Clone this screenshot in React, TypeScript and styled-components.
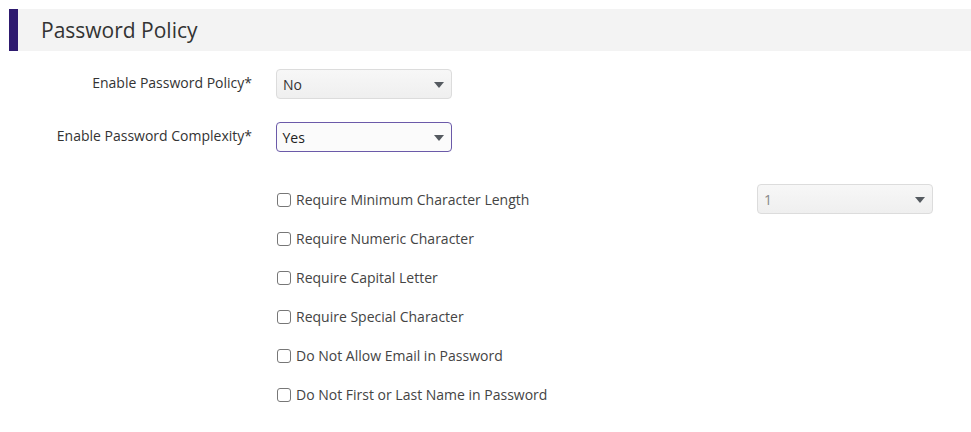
import React from "react";
import styled, { createGlobalStyle } from "styled-components";

const Global = createGlobalStyle`
  html, body { margin: 0; padding: 0; background: #ffffff; }
  body { font-family: "Open Sans", "Noto Sans", Arial, sans-serif; color: #333; }
  * { box-sizing: border-box; }
`;

const Page = styled.div`
  padding: 9px 0 0 9px;
  width: 971px;
  height: 432px;
  overflow: hidden;
`;

const Header = styled.div`
  height: 42px;
  background: #f3f3f3;
  border-left: 9px solid #2e1a6f;
  display: flex;
  align-items: center;
  padding-left: 23px;
`;

const Title = styled.h2`
  margin: 0;
  font-size: 21px;
  font-weight: 400;
  color: #333;
  line-height: 1;
  padding-top: 1px;
`;

const Form = styled.div`
  padding-top: 18px;
  display: flex;
  flex-direction: column;
`;

const FieldRow = styled.div`
  display: grid;
  grid-template-columns: 243px 176px;
  column-gap: 24px;
  align-items: center;
  height: 30px;
  margin-bottom: 23px;
`;

const Label = styled.label`
  text-align: right;
  font-size: 14px;
  color: #333;
  padding-bottom: 3px;
`;

const SelectBox = styled.div<{ $focused?: boolean; $width?: number }>`
  position: relative;
  width: ${(p) => p.$width ?? 176}px;
  height: 30px;
  border-radius: 4px;
  border: ${(p) => (p.$focused ? "1.5px solid #6b5aa9" : "1px solid #dcdcdc")};
  background: ${(p) => (p.$focused ? "#fbfbfb" : "linear-gradient(#f7f7f7, #efefef)")};
  display: flex;
  align-items: center;
  padding-left: ${(p) => (p.$focused ? 5.5 : 6)}px;
  font-size: 14px;
  color: ${(p) => (p.$focused ? "#222" : "#333")};
`;

const Value = styled.span<{ $muted?: boolean }>`
  color: ${(p) => (p.$muted ? "#888" : "inherit")};
`;

const Caret = styled.span`
  position: absolute;
  right: 7px;
  top: 50%;
  margin-top: -2px;
  width: 0;
  height: 0;
  border-left: 5.5px solid transparent;
  border-right: 5.5px solid transparent;
  border-top: 6px solid #555a60;
`;

const Options = styled.div`
  margin-top: 9px;
  padding-left: 267px;
  display: flex;
  flex-direction: column;
  gap: 9px;
`;

const OptionRow = styled.div`
  display: grid;
  grid-template-columns: 481px 176px;
  align-items: center;
  height: 30px;
`;

const CheckLabel = styled.label`
  display: flex;
  align-items: center;
  font-size: 14px;
  color: #444;
  padding-top: 1px;
`;

const Box = styled.span`
  display: inline-block;
  width: 14px;
  height: 14px;
  margin-left: 1px;
  margin-right: 5px;
  border: 1px solid #777;
  border-radius: 3px;
  background: #fff;
  flex: none;
`;

function Select({ value, focused, muted }: { value: string; focused?: boolean; muted?: boolean }) {
  return (
    <SelectBox $focused={focused}>
      <Value $muted={muted}>{value}</Value>
      <Caret />
    </SelectBox>
  );
}

const options = [
  "Require Minimum Character Length",
  "Require Numeric Character",
  "Require Capital Letter",
  "Require Special Character",
  "Do Not Allow Email in Password",
  "Do Not First or Last Name in Password",
];

export default function App() {
  return (
    <>
      <Global />
      <Page>
        <Header>
          <Title>Password Policy</Title>
        </Header>
        <Form>
          <FieldRow>
            <Label>Enable Password Policy*</Label>
            <Select value="No" />
          </FieldRow>
          <FieldRow>
            <Label>Enable Password Complexity*</Label>
            <Select value="Yes" focused />
          </FieldRow>
        </Form>
        <Options>
          {options.map((o, i) => (
            <OptionRow key={o}>
              <CheckLabel>
                <Box />
                {o}
              </CheckLabel>
              {i === 0 ? <Select value="1" muted /> : <span />}
            </OptionRow>
          ))}
        </Options>
      </Page>
    </>
  );
}
